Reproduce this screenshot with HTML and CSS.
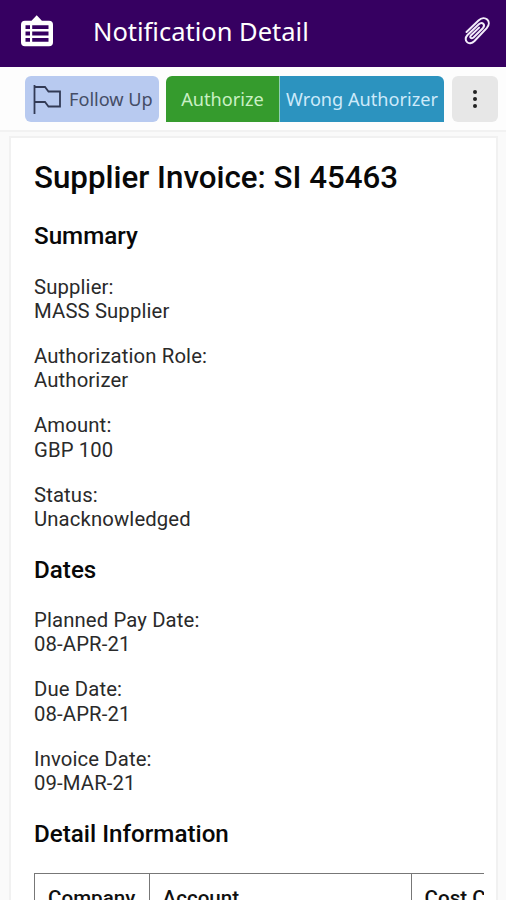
FILE: index.html
```html
<!DOCTYPE html>
<html lang="en">
<head>
<meta charset="utf-8">
<title>Notification Detail</title>
<link rel="stylesheet" href="styles.css">
</head>
<body>
<header class="appbar">
  <svg class="icon-list" viewBox="0 0 34 34" width="34" height="34">
    <path fill="#fff" d="M11.500 6.800 16.700 1.200l5.200 5.600H29a4 4 0 0 1 4 4V28.300a4 4 0 0 1-4 4H5a4 4 0 0 1-4-4V10.800a4 4 0 0 1 4-4z"/>
    <path fill="#360061" d="M5.500 11.200h4.500v3.800H5.500zM12.200 11.200H28.500v3.800H12.200zM5.500 17.500h4.500v4H5.500zM12.200 17.500H28.500v4H12.200zM5.500 24h4.500v3.800H5.500zM12.200 24H28.500v3.800H12.200z"/>
  </svg>
  <h1 class="appbar-title">Notification Detail</h1>
  <svg class="icon-clip" viewBox="0 0 28 30" width="28" height="30">
    <path fill="none" stroke="#f3ecfa" stroke-width="2" stroke-linecap="round" stroke-linejoin="round" d="M3.500 16 15.500 4.500c6.500-6 14 1 8.200 7.600L11.500 25c-5.500 5.500-12-.5-7-6L15.800 8.300c3.600-3 7 .4 4 3.900L10.500 21.500c-2.300 1.900-4.300-.1-2.400-2.300l8-7.600"/>
  </svg>
</header>
<div class="toolbar">
  <button class="btn follow">
    <svg class="icon-flag" viewBox="0 0 30 32" width="30" height="32" fill="none" stroke="#323a55" stroke-width="1.800">
      <path d="M2.500 2v29M2.500 4h10.500l3.500 4.500H28v15H16.500L13 19H2.500"/>
    </svg>
    <span class="label-follow">Follow Up</span>
  </button>
  <div class="group">
    <button class="btn authorize"><span>Authorize</span></button>
    <button class="btn wrong"><span>Wrong Authorizer</span></button>
  </div>
  <button class="btn more" aria-label="More"><i></i><i></i><i></i></button>
</div>
<main class="card">
  <h2 class="title">Supplier Invoice: SI 45463</h2>
  <h3>Summary</h3>
  <p>Supplier:<br>MASS Supplier</p>
  <p>Authorization Role:<br>Authorizer</p>
  <p>Amount:<br>GBP 100</p>
  <p>Status:<br>Unacknowledged</p>
  <h3>Dates</h3>
  <p>Planned Pay Date:<br>08-APR-21</p>
  <p>Due Date:<br>08-APR-21</p>
  <p>Invoice Date:<br>09-MAR-21</p>
  <h3>Detail Information</h3>
  <div class="table-wrap">
    <table>
      <tr><th class="c1">Company</th><th class="c2">Account</th><th class="c3">Cost Center</th></tr>
    </table>
  </div>
</main>
</body>
</html>
```

FILE: styles.css
```css
* { box-sizing: border-box; }
html, body { height: 900px; overflow: hidden; }
body {
  margin: 0;
  display: flex;
  flex-direction: column;
  background: #fafafa;
  font-family: Roboto, "Liberation Sans", sans-serif;
  color: #2a2a2a;
}
.appbar {
  flex: none;
  height: 67px;
  background: #360061;
  display: flex;
  align-items: center;
  padding: 0 15px 3px 20px;
}
.icon-list { flex: none; margin-top: -3px; }
.appbar-title {
  flex: 1;
  margin: -2px 0 0 39px;
  font: 400 25.500px/32px "Noto Sans", sans-serif;
  color: #fff;
  white-space: nowrap;
}
.icon-clip { flex: none; margin-top: -2px; }
.toolbar {
  flex: none;
  height: 65px;
  background: #fdfdfd;
  border-bottom: 2px solid #f2f2f2;
  display: flex;
  padding: 9px 8px 0 25px;
}
.btn {
  border: 0;
  padding: 0;
  height: 46px;
  display: flex;
  align-items: center;
  justify-content: center;
  font: 400 18.150px/26px "Noto Sans", sans-serif;
  white-space: nowrap;
}
.follow {
  width: 134px;
  justify-content: flex-start;
  padding-left: 7px;
  gap: 7px;
  border-radius: 6px;
  background: #b8caf0;
  color: #454d66;
}
.icon-flag { flex: none; }
.group { display: flex; margin: 0 8px 0 7px; border-radius: 6px; overflow: hidden; }
.authorize { width: 114px; background: #359b2d; color: #c9f0c4; border-right: 1px solid #8fcfb5; }
.wrong { width: 164px; background: #2c93bf; color: #cdeafa; }
.more { width: 46px; border-radius: 6px; background: #e7e7e7; flex-direction: column; gap: 3px; }
.more i { width: 4px; height: 4px; border-radius: 50%; background: #222; }
.card {
  flex: 1;
  min-height: 0;
  overflow: hidden;
  margin: 4px 8px 0 9px;
  padding: 22px 12px 0 23px;
  background: #fff;
  border: 2px solid #f1f1f1;
  border-bottom: 0;
}
.title { margin: 0; font-size: 31.300px; line-height: 36px; font-weight: 500; color: #080808; }
h3 { margin: 24px 0 0; font-size: 24.200px; line-height: 28px; font-weight: 500; color: #080808; }
.title + h3 { margin-top: 26px; }
p { margin: 20.600px 0 0; font-size: 20.300px; line-height: 24.400px; font-weight: 400; letter-spacing: 0.130px; }
h3 + p { margin-top: 24.500px; }
.table-wrap { margin-top: 25px; overflow: hidden; }
table { border-collapse: collapse; table-layout: fixed; width: 560px; }
th { border: 1px solid #777; padding: 12px 13px; text-align: left; font-size: 20.600px; line-height: 25px; font-weight: 500; color: #111; }
.c1 { width: 114.500px; }
.c2 { width: 262px; }
```
